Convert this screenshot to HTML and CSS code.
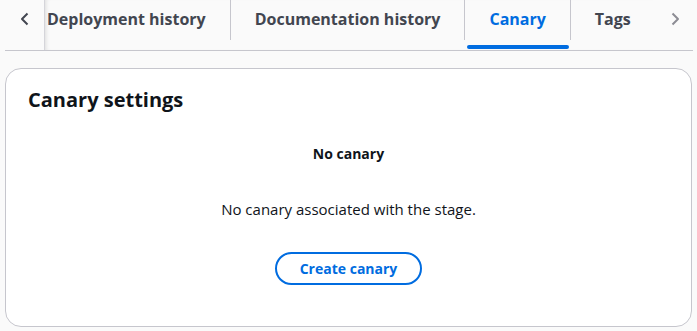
FILE: index.html
```html
<!DOCTYPE html>
<html>
<head>
<meta charset="utf-8">
<link rel="stylesheet" href="styles.css">
</head>
<body>
<div class="page">
  <div class="tabs">
    <div class="tabs-header">
      <button class="arrow arrow-left" aria-label="Scroll left">
        <svg width="16" height="16" viewBox="0 0 16 16"><path d="M10.5 2.5 5 8l5.5 5.5" fill="none" stroke="currentColor" stroke-width="2" stroke-linejoin="round"/></svg>
      </button>
      <div class="tab-list">
        <div class="tab-track">
          <div class="tab">Deployment history</div>
          <div class="tab">Documentation history</div>
          <div class="tab active">Canary</div>
          <div class="tab last">Tags</div>
        </div>
      </div>
      <button class="arrow arrow-right" aria-label="Scroll right">
        <svg width="16" height="16" viewBox="0 0 16 16"><path d="M5.5 2.5 11 8l-5.5 5.5" fill="none" stroke="currentColor" stroke-width="2" stroke-linejoin="round"/></svg>
      </button>
    </div>
  </div>
  <div class="card">
    <h2 class="card-title">Canary settings</h2>
    <div class="empty">
      <div class="empty-title">No canary</div>
      <p class="empty-text">No canary associated with the stage.</p>
      <button class="btn">Create canary</button>
    </div>
  </div>
</div>
</body>
</html>
```
FILE: styles.css
```css
* { box-sizing: border-box; }
html, body { margin: 0; padding: 0; }
body {
  background: #fafafa;
  font-family: "Open Sans", "Noto Sans", sans-serif;
  color: #0f141a;
  width: 697px;
  height: 331px;
  overflow: hidden;
}
.page { padding: 0 5px; }
.tabs-header {
  display: flex;
  align-items: flex-start;
  border-bottom: 1px solid #c6c6cd;
  height: 51px;
  width: 688px;
}
.arrow {
  border: 0;
  background: transparent;
  padding: 0;
  display: flex;
  align-items: center;
  justify-content: center;
  height: 38px;
}
.arrow-left {
  width: 39px;
  color: #424650;
}
.arrow-right {
  width: 40px;
  color: #8c8c94;
  padding-left: 4px;
}
.tab-list {
  flex: 1;
  overflow: hidden;
  position: relative;
  border-left: 1px solid #d5d5da;
  box-shadow: inset 4px 0 4px -3px rgba(0,0,0,0.12);
  height: 50px;
}
.tab-track {
  display: flex;
  margin-left: -22px;
  height: 50px;
}
.tab {
  flex: none;
  position: relative;
  font-size: 16px;
  font-weight: 700;
  color: #424650;
  line-height: 20px;
  padding: 9px 24px 0;
  height: 40px;
  border-right: 1px solid #c6c6cd;
  white-space: nowrap;
}
.tab.last { height: 36px; margin-top: 2px; padding-top: 7px; }
.tab.active { color: #006ce0; }
.tab.active::after {
  content: "";
  position: absolute;
  left: 2px;
  right: 1px;
  top: 45px;
  height: 4px;
  border-radius: 2px;
  background: #006ce0;
}
.card {
  margin-top: 17px;
  background: #fff;
  border: 1px solid #c6c6cd;
  border-radius: 16px;
  height: 259px;
  padding: 17px 22px 0;
}
.card-title {
  margin: 0;
  font-size: 20px;
  line-height: 28px;
  font-weight: 700;
  color: #0f141a;
}
.empty {
  display: flex;
  flex-direction: column;
  align-items: center;
  padding-top: 30px;
}
.empty-title {
  font-size: 14px;
  font-weight: 700;
  line-height: 20px;
}
.empty-text {
  margin: 35px 0 0;
  font-size: 15px;
  line-height: 20px;
}
.btn {
  margin-top: 33px;
  font-family: inherit;
  font-size: 14px;
  font-weight: 700;
  color: #006ce0;
  background: #fff;
  border: 2px solid #006ce0;
  border-radius: 20px;
  height: 33px;
  padding: 0 23px;
  line-height: 20px;
}
```
